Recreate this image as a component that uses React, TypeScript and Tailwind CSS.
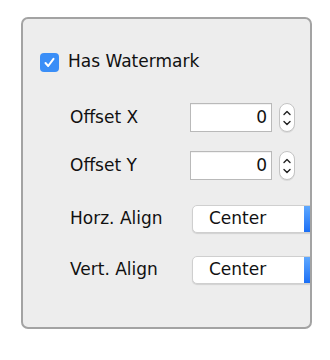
import React from 'react';

const FONT = { fontFamily: '"DejaVu Sans", "Liberation Sans", sans-serif' };

function Stepper() {
  return (
    <div className="ml-[7px] flex h-[29px] w-[16px] shrink-0 flex-col items-center justify-center rounded-full border border-[#c4c4c4] bg-white shadow-[0_1px_0_rgba(0,0,0,0.08)]">
      <svg width="10" height="22" viewBox="0 0 10 22" fill="none" stroke="#222" strokeWidth="1.4" strokeLinecap="round" strokeLinejoin="round">
        <path d="M2 7.5 L5 4.5 L8 7.5" />
        <path d="M2 14.5 L5 17.5 L8 14.5" />
      </svg>
    </div>
  );
}

function NumberRow({ label, value, className }: { label: string; value: string; className: string }) {
  return (
    <div className={`flex items-center ${className}`}>
      <div className="w-[120px] shrink-0 text-[17px] text-[#111]">{label}</div>
      <div className="flex h-[29px] w-[82px] shrink-0 items-center justify-end border border-[#b9b9b9] bg-white pr-[4px] text-[17px] text-[#111] shadow-[inset_0_1px_0_rgba(0,0,0,0.05)]">
        {value}
      </div>
      <Stepper />
    </div>
  );
}

function PopupRow({ label, value, className }: { label: string; value: string; className: string }) {
  return (
    <div className={`flex items-center ${className}`}>
      <div className="w-[122px] shrink-0 text-[17px] text-[#111]">{label}</div>
      <div className="flex h-[28px] w-[140px] shrink-0 overflow-hidden rounded-[5px] border border-[#cfcfcf] bg-white shadow-[0_1px_1px_rgba(0,0,0,0.12)]">
        <div className="flex w-[111px] items-center pl-[16px] text-[17px] text-[#111]">{value}</div>
        <div className="flex-1 bg-gradient-to-b from-[#5ea8ff] to-[#1a6ef5]" />
      </div>
    </div>
  );
}

export default function App() {
  return (
    <div className="h-[360px] w-[330px] bg-white pl-[21px] pt-[17px]" style={FONT}>
      <div className="flex h-[312px] w-[291px] flex-col overflow-hidden rounded-[7px] border-2 border-[#a3a3a3] bg-[#ededed] pl-[17px] pt-[33px]">
        <div className="flex h-[20px] items-center">
          <div className="flex h-[19px] w-[19px] items-center justify-center rounded-[4px] bg-[#3a8ef7]">
            <svg width="13" height="13" viewBox="0 0 13 13" fill="none" stroke="white" strokeWidth="2" strokeLinecap="round" strokeLinejoin="round">
              <path d="M2.5 7 L5.2 10 L10.5 2.8" />
            </svg>
          </div>
          <span className="ml-[9px] text-[17px] text-[#111]">Has Watermark</span>
        </div>
        <div className="pl-[30px]">
          <NumberRow label="Offset X" value="0" className="mt-[31px]" />
          <NumberRow label="Offset Y" value="0" className="mt-[19px]" />
          <PopupRow label="Horz. Align" value="Center" className="mt-[25px]" />
          <PopupRow label="Vert. Align" value="Center" className="mt-[23px]" />
        </div>
      </div>
    </div>
  );
}
